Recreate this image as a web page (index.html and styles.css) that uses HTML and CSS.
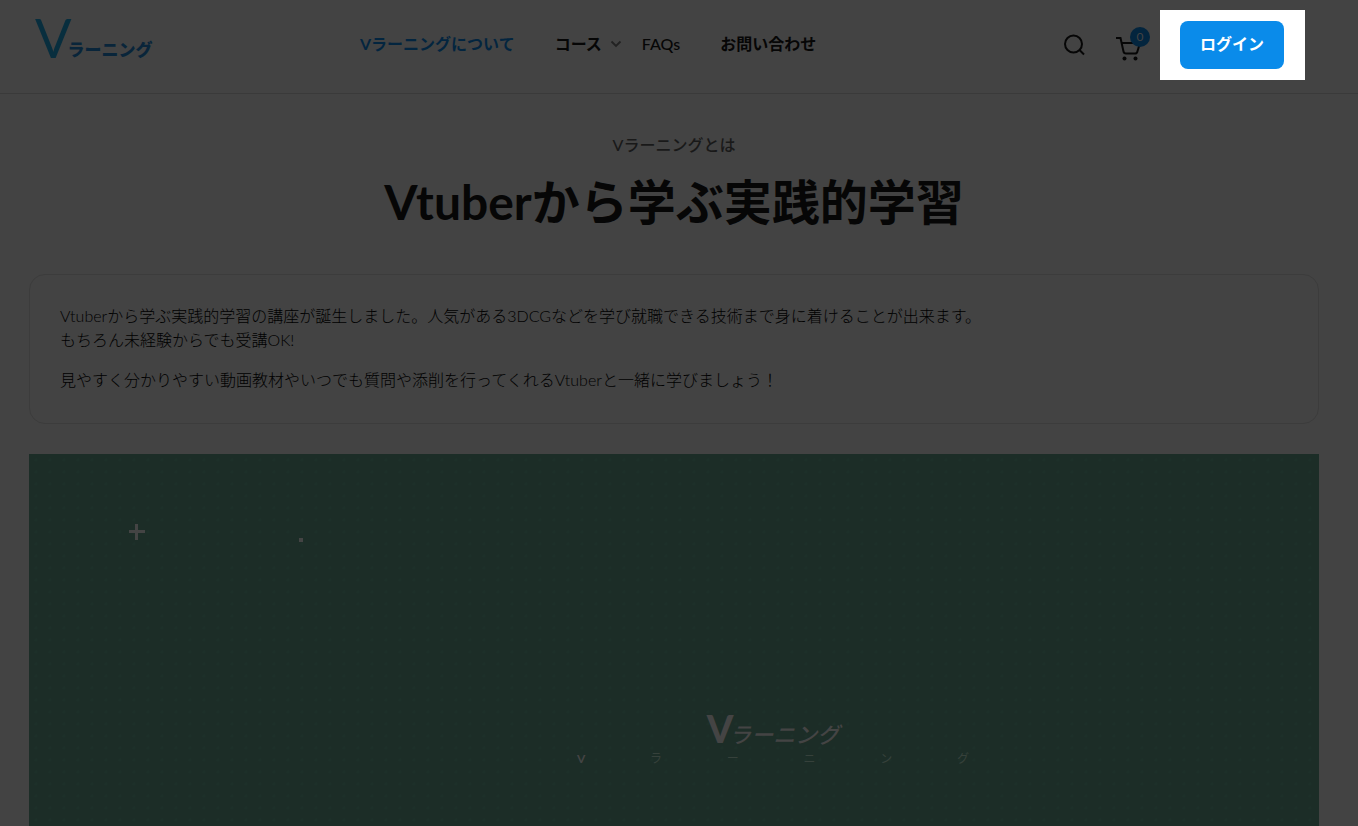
FILE: index.html
```
<!DOCTYPE html>
<html lang="ja">
<head>
    <meta charset="UTF-8">
    <meta name="viewport" content="width=device-width, initial-scale=1.0">
    <title>Vラーニング</title>
    <link rel="stylesheet" href="styles.css">
</head>
<body>
    <header class="header">
        <a class="logo" href="#"><span class="logo-v">V</span><span class="logo-kana">ラーニング</span></a>
        <nav class="nav">
            <a class="active" href="#">Vラーニングについて</a>
            <a class="has-menu" href="#">コース
                <svg class="chevron" width="12" height="8" viewBox="0 0 12 8"><path d="M1.5 1.5 6 6l4.5-4.5" fill="none" stroke="currentColor" stroke-width="1.8"/></svg>
            </a>
            <a class="faq" href="#">FAQs</a>
            <a href="#">お問い合わせ</a>
        </nav>
        <div class="actions">
            <button class="icon-btn" type="button" aria-label="検索">
                <svg width="22" height="22" viewBox="0 0 22 22" fill="none" stroke="currentColor" stroke-width="2"><circle cx="10.500" cy="10" r="8.500"/><path d="m16.500 16 4.500 4.500"/></svg>
            </button>
            <button class="icon-btn cart" type="button" aria-label="カート">
                <svg width="26" height="26" viewBox="0 0 26 26" fill="none" stroke="currentColor" stroke-width="2"><path d="M0 3h4.500l3 13.500q.4 2 2.500 2h9q2 0 2.400-2L24 8H5.600"/><circle cx="8.500" cy="23.500" r="2" fill="currentColor" stroke="none"/><circle cx="19.500" cy="23.500" r="2" fill="currentColor" stroke="none"/></svg>
                <span class="badge">0</span>
            </button>
            <div class="spotlight">
                <button class="login" type="button">ログイン</button>
            </div>
        </div>
    </header>

    <main class="content">
        <p class="subtitle">Vラーニングとは</p>
        <h1>Vtuberから学ぶ実践的学習</h1>

        <section class="card">
            <p>Vtuberから学ぶ実践的学習の講座が誕生しました。人気がある3DCGなどを学び就職できる技術まで身に着けることが出来ます。<br>もちろん未経験からでも受講OK!</p>
            <p>見やすく分かりやすい動画教材やいつでも質問や添削を行ってくれるVtuberと一緒に学びましょう！</p>
        </section>

        <section class="banner">
            <svg class="sparks" width="176" height="20" viewBox="0 0 176 20" fill="currentColor"><path d="M6 0h3v6h7v3H9v7H6V9H0V6h6zM170 14h4v4h-4z"/></svg>
            <div class="banner-logo">
                <div class="banner-title"><span class="banner-v">V</span><span class="banner-kana">ラーニング</span></div>
                <div class="banner-letters">
                    <b>V</b><span>ラ</span><span>ー</span><span>ニ</span><span>ン</span><span>グ</span>
                </div>
            </div>
        </section>
    </main>
</body>
</html>
```
FILE: styles.css
```
* {
    box-sizing: border-box;
}

body {
    margin: 0;
    min-height: 100vh;
    display: flex;
    flex-direction: column;
    background-color: #434343;
    color: #060606;
    font-family: Lato, "Noto Sans CJK JP", sans-serif;
    font-size: 16px;
    line-height: 24px;
}

a {
    color: inherit;
    text-decoration: none;
}

button {
    padding: 0;
    border: none;
    background: none;
    color: inherit;
    font-family: inherit;
    font-size: 16px;
    cursor: pointer;
}

.header {
    display: flex;
    align-items: flex-start;
    height: 94px;
    padding: 10px 53px 0 35px;
    border-bottom: 1px solid #3a3a3a;
}

.logo {
    display: flex;
    align-items: flex-end;
    flex: 0 0 325px;
}

.logo-v {
    color: #082e3e;
    font-size: 54px;
    line-height: 56px;
}

.logo-kana {
    margin-left: -4px;
    color: #09253a;
    font-size: 17px;
    font-weight: 900;
    line-height: 32px;
}

.nav {
    display: flex;
    gap: 40px;
    padding-top: 22px;
    font-weight: 700;
    white-space: nowrap;
}

.nav .active {
    color: #03253f;
}

.has-menu {
    display: flex;
    align-items: center;
    gap: 8px;
    margin-right: -20px;
}

.chevron {
    color: #222;
}

.faq {
    font-weight: 500;
}

.actions {
    display: flex;
    align-items: flex-start;
    margin-left: auto;
}

.icon-btn {
    display: flex;
    margin: 24px 31px 0 0;
}

.cart {
    position: relative;
    margin: 25px 18px 0 0;
}

.badge {
    position: absolute;
    top: -8px;
    right: -8px;
    width: 20px;
    height: 20px;
    border-radius: 50%;
    background-color: #03253e;
    color: #434343;
    font-size: 12px;
    line-height: 20px;
    text-align: center;
}

.spotlight {
    padding: 11px 21px 11px 20px;
    background-color: #fff;
}

.login {
    height: 48px;
    padding: 0 20px 4px;
    border-radius: 8px;
    background-color: #0a8bea;
    color: #fff;
    font-weight: 700;
    white-space: nowrap;
}

.content {
    display: flex;
    flex: 1;
    flex-direction: column;
    padding: 39px 39px 0 29px;
}

.subtitle {
    margin: 0;
    color: #191919;
    font-weight: 500;
    text-align: center;
}

h1 {
    margin: 16px 0 43px;
    font-size: 48px;
    font-weight: 700;
    line-height: 58px;
    text-align: center;
}

.card {
    padding: 29px 30px;
    border: 1px solid #3c3c3c;
    border-radius: 16px;
    color: #000;
    font-weight: 300;
}

.card p {
    margin: 0 0 16px;
}

.card p:last-child {
    margin-bottom: 2px;
}

.banner {
    display: flex;
    flex: 1;
    flex-direction: column;
    justify-content: space-between;
    margin-top: 30px;
    padding: 70px 0 59px 100px;
    background-color: #1c2d27;
    background-image: radial-gradient(circle, #1d3029 1px, transparent 2px);
    background-size: 14px 12px;
    color: #444;
}

.banner-logo {
    width: 392px;
    margin-left: 448px;
}

.banner-title {
    display: flex;
    align-items: baseline;
    justify-content: center;
    line-height: 32px;
}

.banner-v {
    font-size: 38px;
    font-weight: 900;
}

.banner-kana {
    margin-left: -4px;
    font-size: 22px;
    font-style: italic;
    font-weight: 500;
}

.banner-letters {
    display: flex;
    justify-content: space-between;
    color: #36413b;
    font-size: 12px;
    line-height: 16px;
}

.banner-letters b {
    color: #444;
}
```
